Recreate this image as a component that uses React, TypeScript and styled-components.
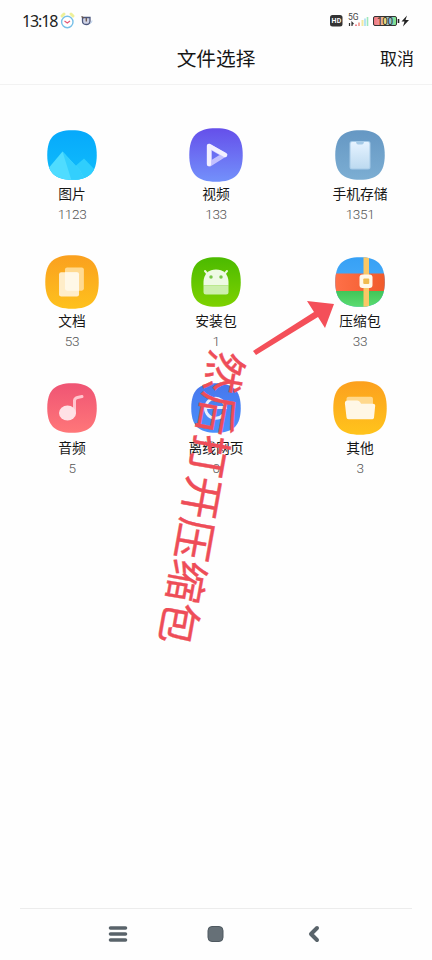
import React from "react";
import styled, { createGlobalStyle } from "styled-components";

const Global = createGlobalStyle`
  * { box-sizing: border-box; }
  body { margin: 0; background: #fefefe; font-family: Roboto, "Noto Sans CJK SC", sans-serif; color: #161616; }
`;

const Screen = styled.div`
  position: relative;
  width: 432px;
  height: 960px;
  display: flex;
  flex-direction: column;
  overflow: hidden;
  background: #fefefe;
`;
const StatusBar = styled.div`
  height: 42px;
  padding: 0 21px 0 22px;
  display: flex;
  align-items: center;
  justify-content: space-between;
`;
const StatusGroup = styled.div`
  display: flex;
  align-items: center;
`;
const Clock = styled.span`
  font: 400 16px/20px "Noto Sans", sans-serif;
  width: 37px;
  letter-spacing: -1.1px;
  color: #222;
  white-space: nowrap;
`;
const Header = styled.header`
  height: 43px;
  display: grid;
  grid-template-columns: 100px 1fr 100px;
  padding-bottom: 8px;
  align-items: center;
  border-bottom: 1px solid #f2f2f2;
`;
const Title = styled.h1`
  grid-column: 2;
  margin: 1px 0 0;
  text-align: center;
  font-size: 19.7px;
  line-height: 32px;
  font-weight: 400;
`;
const Cancel = styled.button`
  border: 0;
  background: none;
  padding: 0 18px 2px 0;
  text-align: right;
  font: 400 17px/32px "Noto Sans CJK SC", sans-serif;
  color: #161616;
`;
const Grid = styled.main`
  flex: 1;
  padding-top: 42.7px;
  display: grid;
  grid-template-columns: repeat(3, 144px);
  grid-auto-rows: 126.9px;
`;
const Cell = styled.div`
  display: flex;
  flex-direction: column;
  align-items: center;
`;
const IconBox = styled.div`
  height: 54px;
  display: flex;
  align-items: center;
`;
const Label = styled.div`
  margin-top: 2.3px;
  font-size: 13.8px;
  line-height: 20px;
`;
const Count = styled.div`
  font: 300 13.6px/20px Roboto, sans-serif;
  letter-spacing: -0.4px;
  color: #555;
`;
const NavBar = styled.nav`
  height: 52px;
  margin: 0 20px;
  border-top: 1px solid #ececec;
  display: flex;
  justify-content: space-between;
  align-items: center;
  padding: 0 88px 2px;
`;
const NavIcon = styled.svg`
  width: 20px;
  height: 20px;
`;
const Note = styled.div`
  position: absolute;
  left: 203.5px;
  top: 497.5px;
  transform: translate(-50%, -50%) rotate(100.2deg);
  font: 400 42.5px/50px "Noto Sans CJK SC", sans-serif;
  color: #ee4d58;
  -webkit-text-stroke: 0.4px #ee4d58;
  white-space: nowrap;
`;
const Arrow = styled.svg`
  position: absolute;
  left: 0;
  top: 0;
  pointer-events: none;
`;

const SQUIRCLE = "M50 .5C85 .5 99.500 15 99.500 50S85 99.500 50 99.500 .5 85 .5 50 15 .5 50 .5Z";

type TileProps = { id: string; size: number; from: string; to: string; children: React.ReactNode };
const Tile = ({ id, size, from, to, children }: TileProps) => (
  <svg width={size} height={size} viewBox="0 0 100 100">
    <defs>
      <linearGradient id={id} x1="0" y1="0" x2="0" y2="1">
        <stop offset="0" stopColor={from} />
        <stop offset="1" stopColor={to} />
      </linearGradient>
      <clipPath id={id + "-clip"}><path d={SQUIRCLE} /></clipPath>
    </defs>
    <g clipPath={`url(#${id}-clip)`}>
      <rect width="100" height="100" fill={`url(#${id})`} />
      {children}
    </g>
  </svg>
);

const items = [
  {
    label: "图片", count: "1123",
    icon: (
      <Tile id="pic" size={50} from="#07a9fb" to="#10bdfb">
        <path d="M50 78 74 57 104 88V104H40Z" fill="#2fcefd" />
        <path d="M0 80 31 43 66 81 78 104H0Z" fill="#4fdcff" />
        <path d="M31 43 66 81 78 104H50Z" fill="#33cffd" />
      </Tile>
    ),
  },
  {
    label: "视频", count: "133",
    icon: (
      <Tile id="vid" size={54} from="#654fea" to="#7391fb">
        <path d="M38 34V67L65 50Z" fill="none" stroke="#c3c0ff" strokeWidth="9" strokeLinejoin="round" />
        <path d="M37 67V33L67 50" fill="none" stroke="#f3f0ff" strokeWidth="8" strokeLinejoin="round" strokeLinecap="round" />
      </Tile>
    ),
  },
  {
    label: "手机存储", count: "1351",
    icon: (
      <Tile id="phone" size={50} from="#6597c3" to="#7caed3">
        <linearGradient id="glass" x2="0" y2="1"><stop stopColor="#e6f3ff" /><stop offset="1" stopColor="#bddaf0" /></linearGradient>
        <rect x="29" y="22" width="42" height="57" rx="5" fill="#a5cae7" />
        <path d="M34 24H42Q43 29 46 29H54Q57 29 58 24H66Q69 24 69 28V74Q69 77 66 77H34Q31 77 31 74V28Q31 24 34 24Z" fill="url(#glass)" />
      </Tile>
    ),
  },
  {
    label: "文档", count: "53",
    icon: (
      <Tile id="doc" size={54} from="#faa01f" to="#fec11d">
        <rect x="37" y="23" width="35" height="43" rx="4" fill="#ffda91" />
        <rect x="26" y="32" width="37" height="45" rx="4" fill="#ffedc8" />
        <path d="M37 32H59Q63 32 63 36V66H41Q37 66 37 62Z" fill="#fff8e7" />
      </Tile>
    ),
  },
  {
    label: "安装包", count: "1",
    icon: (
      <Tile id="apk" size={50} from="#4bba00" to="#7ed200">
        <path d="M33 34 28 28M67 34 72 28" stroke="#eaf9db" strokeWidth="4" strokeLinecap="round" />
        <path d="M25 57V50C25 34 36 25 50 25S75 34 75 50V57Z" fill="#eefae4" />
        <path d="M25 57H75V70Q75 75 70 75H30Q25 75 25 70Z" fill="#ccefac" />
        <circle cx="40" cy="40" r="3.5" fill="#77c748" /><circle cx="60" cy="40" r="3.5" fill="#77c748" />
      </Tile>
    ),
  },
  {
    label: "压缩包", count: "33",
    icon: (
      <Tile id="zip" size={50} from="#36a0f5" to="#54b4fb">
        <linearGradient id="zr"><stop stopColor="#ff7048" /><stop offset="1" stopColor="#f05a2b" /></linearGradient>
        <linearGradient id="zg" x2="0" y2="1"><stop stopColor="#42c458" /><stop offset="1" stopColor="#5bdc70" /></linearGradient>
        <rect y="33" width="100" height="35" fill="url(#zr)" />
        <rect y="68" width="100" height="32" fill="url(#zg)" />
        <rect x="57" width="11" height="100" fill="#fbc765" />
        <rect x="49" y="35" width="26" height="27" rx="6" fill="#fff8e8" />
        <rect x="56.500" y="43" width="12" height="11" rx="2" fill="#f0bb4e" />
      </Tile>
    ),
  },
  {
    label: "音频", count: "5",
    icon: (
      <Tile id="aud" size={50} from="#ef5474" to="#ff7779">
        <path d="M55 60V35Q56 30 61 29L70 27" fill="none" stroke="#ffc5ce" strokeWidth="6" strokeLinecap="round" />
        <ellipse cx="41" cy="60" rx="17" ry="15" fill="#ffe1e6" />
      </Tile>
    ),
  },
  {
    label: "离线网页", count: "0",
    icon: (
      <Tile id="web" size={50} from="#4776ed" to="#4b91fc">
        <path d="M31 49H69A20 20 0 1 0 64 64" fill="none" stroke="#e6efff" strokeWidth="6" />
      </Tile>
    ),
  },
  {
    label: "其他", count: "3",
    icon: (
      <Tile id="other" size={54} from="#fca01e" to="#ffc41c">
        <path d="M25 33Q25 29 29 29H70Q74 29 74 33V52H25Z" fill="#ffd88c" />
        <path d="M22 41Q22 36 27 36H45Q48 36 50 39L52 42H74Q79 42 78 47L76 67Q76 71 71 71H29Q25 71 25 67Z" fill="#fff7e6" />
      </Tile>
    ),
  },
];

const StatusLeftIcons = () => (
  <svg width="38" height="20" viewBox="0 0 38 20">
    <path d="M3 5 5 3M12 3 14 5" stroke="#eef09a" strokeWidth="3" strokeLinecap="round" />
    <circle cx="8.300" cy="11" r="5.700" fill="#fff" stroke="#78c0e8" strokeWidth="1.400" />
    <path d="M5.500 10 8.300 12 11 10" fill="none" stroke="#e35a78" strokeWidth="1.200" />
    <path d="M23.500 6.500H31V10Q31 13.500 27.200 13.500T23.500 10Z" fill="#cfd3e6" stroke="#4c577d" strokeWidth="1.300" />
    <path d="M27.300 7V10.500M22.500 5.500 25 7" stroke="#6b564b" strokeWidth="1.300" />
    <path d="M31 12.500Q33 12 33 9.500" fill="none" stroke="#b9d0ec" />
  </svg>
);

const Small = styled.text<{ $size: number; $weight?: number }>`
  font-family: Roboto, sans-serif;
  font-size: ${(p) => p.$size}px;
  font-weight: ${(p) => p.$weight ?? 400};
`;

const StatusRightIcons = () => (
  <svg width="82" height="20" viewBox="329 11 82 20">
    <defs>
      <linearGradient id="bat"><stop stopColor="#ef7580" /><stop offset=".3" stopColor="#ef9a9a" /><stop offset=".5" stopColor="#f2e27a" /><stop offset=".68" stopColor="#8ab8ee" /><stop offset="1" stopColor="#7dee76" /></linearGradient>
    </defs>
    <rect x="330" y="15" width="12.500" height="11.500" rx="2.500" fill="#333" />
    <Small $size={7} $weight={700} x="331.500" y="23.300" fill="#fff" textLength="9.800">HD</Small>
    <Small $size={8.5} x="348" y="19.500" fill="#444" textLength="10.500">5G</Small>
    <path d="M349.500 23V26M352 26V22.500L353.500 24" fill="none" stroke="#333" strokeWidth="1.200" />
    <path d="M356 26V24.500" stroke="#ee8590" strokeWidth="2" />
    <path d="M359 26V22.500" stroke="#f4a9a0" strokeWidth="2" />
    <path d="M362.500 26V20" stroke="#f3e9a0" strokeWidth="2" />
    <path d="M365 26V18.500" stroke="#a6dcf2" strokeWidth="1.600" />
    <path d="M367.500 26V17" stroke="#9fe8bb" strokeWidth="1.600" />
    <rect x="373.500" y="16.500" width="23" height="9" rx="1.500" fill="url(#bat)" stroke="#333" />
    <Small $size={10} x="377" y="24.600" fill="#31352c" textLength="16">100</Small>
    <path d="M398.500 19V23" stroke="#222" strokeWidth="1.600" />
    <path d="M407 15.500 401.500 21.500H404.500L403 26.500 409 20H405.500Z" fill="#222" />
  </svg>
);

export default function App() {
  return (
    <>
      <Global />
      <Screen>
        <StatusBar>
          <StatusGroup><Clock>13:18</Clock><StatusLeftIcons /></StatusGroup>
          <StatusGroup><StatusRightIcons /></StatusGroup>
        </StatusBar>
        <Header><Title>文件选择</Title><Cancel>取消</Cancel></Header>
        <Grid>
          {items.map((it) => (
            <Cell key={it.label}>
              <IconBox>{it.icon}</IconBox>
              <Label>{it.label}</Label>
              <Count>{it.count}</Count>
            </Cell>
          ))}
        </Grid>
        <NavBar>
          <NavIcon viewBox="0 0 20 20"><path d="M2.500 4H17.500M2.500 10H17.500M2.500 16H17.500" stroke="#59636a" strokeWidth="3.600" strokeLinecap="round" /></NavIcon>
          <NavIcon viewBox="0 0 20 20"><rect x="2" y="2.500" width="15" height="15" rx="4" fill="#667077" stroke="#4f5960" /></NavIcon>
          <NavIcon viewBox="0 0 20 20"><path d="M13 4 7 10 13 16" fill="none" stroke="#59636a" strokeWidth="4" strokeLinecap="round" strokeLinejoin="round" /></NavIcon>
        </NavBar>
        <Note>然后打开压缩包</Note>
        <Arrow width="432" height="400" viewBox="0 0 432 400">
          <path d="M253 351 314 312 307 301 334 304 325 328 318 317 256 355Z" fill="#f44f59" />
        </Arrow>
      </Screen>
    </>
  );
}
